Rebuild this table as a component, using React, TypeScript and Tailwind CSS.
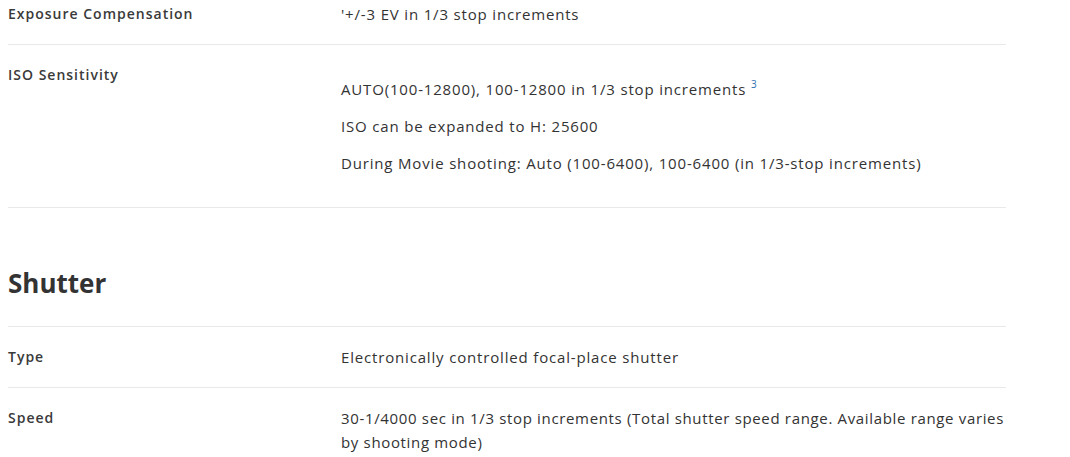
const font = "font-['Open_Sans',_'Liberation_Sans',_sans-serif]";

interface SpecRow {
    label: string;
    values: React.ReactNode[];
    spaced?: boolean;
    tight?: boolean;
}

function Row({ label, values, spaced, tight }: SpecRow) {
    return (
        <div className="grid grid-cols-[333px_1fr] border-b border-[#e9e9e9]">
            <div className="pt-[18px] pb-[18px] text-[14px] font-semibold tracking-[1px] text-[#3a3a3a] leading-6">{label}</div>
            <div className={spaced ? 'pt-[32px] pb-[32px] space-y-[13px]' : 'pt-[18px] pb-[18px]'}>
                {values.map((v, i) => (
                    <p key={i} className={`w-[680px] text-[15px] leading-6 text-[#333] ${tight ? 'tracking-[0.66px]' : 'tracking-[0.83px]'}`}>{v}</p>
                ))}
            </div>
        </div>
    );
}

export default function App() {
    return (
        <div className={`${font} bg-white w-[1070px] h-[457px] overflow-hidden`}>
            <div className="ml-2 w-[998px] -mt-[16px]">
                <Row label="Exposure Compensation" values={["'+/-3 EV in 1/3 stop increments"]} />
                <Row
                    label="ISO Sensitivity"
                    spaced
                    values={[
                        <>AUTO(100-12800), 100-12800 in 1/3 stop increments <sup className="text-[10px] tracking-normal text-[#2a6fb0] align-[2px]">3</sup></>,
                        'ISO can be expanded to H: 25600',
                        'During Movie shooting: Auto (100-6400), 100-6400 (in 1/3-stop increments)',
                    ]}
                />
                <h2 className="pt-[59px] pb-[27px] text-[26px] font-bold text-[#333] leading-8 border-b border-[#e9e9e9]">Shutter</h2>
                <Row label="Type" values={['Electronically controlled focal-place shutter']} />
                <Row
                    label="Speed"
                    tight
                    values={['30-1/4000 sec in 1/3 stop increments (Total shutter speed range. Available range varies by shooting mode)']}
                />
            </div>
        </div>
    );
}
